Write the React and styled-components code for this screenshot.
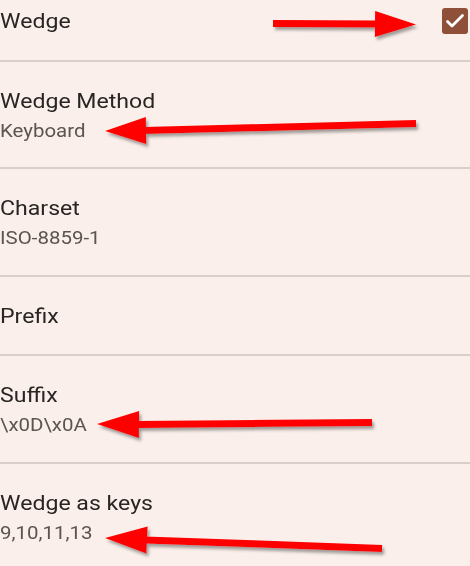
import React from 'react'
import styled, { createGlobalStyle } from 'styled-components'

const GlobalStyle = createGlobalStyle`
  html, body {
    margin: 0;
    padding: 0;
    background: #faefea;
    overflow: hidden;
  }
  body {
    font-family: Roboto, "Noto Sans", sans-serif;
  }
`

const Screen = styled.div`
  position: relative;
  width: 470px;
  height: 566px;
  overflow: hidden;
  background: #faefea;
`

const List = styled.div`
  display: flex;
  flex-direction: column;
  margin-top: -18px;
`

const Row = styled.div`
  display: flex;
  align-items: center;
  justify-content: space-between;
  padding: 25px 2px 24.5px 0;
  border-bottom: 2px solid #d9cfca;
`

// the capture is a little stretched sideways
const Texts = styled.div`
  display: flex;
  flex-direction: column;
  gap: 4px;
  transform: scaleX(1.1);
  transform-origin: left center;
`

const Title = styled.div`
  font-size: 21px;
  line-height: 28px;
  color: #282523;
`

const Summary = styled.div`
  font-size: 18.6px;
  line-height: 24px;
  color: #5b5451;
`

const Check = styled.div`
  width: 26px;
  height: 26px;
  border-radius: 3px;
  background: #8e5039;
  display: flex;
  align-items: center;
  justify-content: center;
`

const Overlay = styled.svg`
  position: absolute;
  left: 0;
  top: 0;
  pointer-events: none;
`

const prefs = [
  { title: 'Wedge', checked: true },
  { title: 'Wedge Method', summary: 'Keyboard' },
  { title: 'Charset', summary: 'ISO-8859-1' },
  { title: 'Prefix' },
  { title: 'Suffix', summary: '\\x0D\\x0A' },
  { title: 'Wedge as keys', summary: '9,10,11,13' },
]

// shaft start (tail), head base, tip
const arrows = [
  { tail: [273, 23.5], base: [375, 24], tip: [416, 24.5], half: 13 },
  { tail: [416, 123.5], base: [146, 130.5], tip: [105, 131], half: 13.5 },
  { tail: [372, 422.5], base: [139, 424.5], tip: [97, 424], half: 13.5 },
  { tail: [382, 548.5], base: [147, 540], tip: [105, 538], half: 13.5 },
]

function Arrow({ tail, base, tip, half }) {
  const dx = tip[0] - base[0]
  const dy = tip[1] - base[1]
  const len = Math.hypot(dx, dy)
  const nx = -dy / len
  const ny = dx / len
  const head = [
    [base[0] + nx * half, base[1] + ny * half],
    tip,
    [base[0] - nx * half, base[1] - ny * half],
  ]
  return (
    <g filter="url(#shadow)">
      <line x1={tail[0]} y1={tail[1]} x2={base[0] + (dx / len) * 2} y2={base[1] + (dy / len) * 2} stroke="#ff0000" strokeWidth="7" />
      <polygon points={head.map((p) => p.join(',')).join(' ')} fill="#ff0000" />
    </g>
  )
}

export default function App() {
  return (
    <Screen>
      <GlobalStyle />
      <List>
        {prefs.map((p) => (
          <Row key={p.title}>
            <Texts>
              <Title>{p.title}</Title>
              {p.summary && <Summary>{p.summary}</Summary>}
            </Texts>
            {p.checked && (
              <Check>
                <svg width="26" height="26" viewBox="0 0 26 26">
                  <path d="M5.5 13.5 L10 18 L20.5 7.5" fill="none" stroke="#fff" strokeWidth="2.8" strokeLinecap="round" strokeLinejoin="round" />
                </svg>
              </Check>
            )}
          </Row>
        ))}
      </List>
      <Overlay width="470" height="566">
        <defs>
          <filter id="shadow" x="-10%" y="-50%" width="120%" height="200%">
            <feDropShadow dx="2" dy="3" stdDeviation="1.5" floodColor="#555" floodOpacity="0.55" />
          </filter>
        </defs>
        {arrows.map((a, i) => (
          <Arrow key={i} {...a} />
        ))}
      </Overlay>
    </Screen>
  )
}
